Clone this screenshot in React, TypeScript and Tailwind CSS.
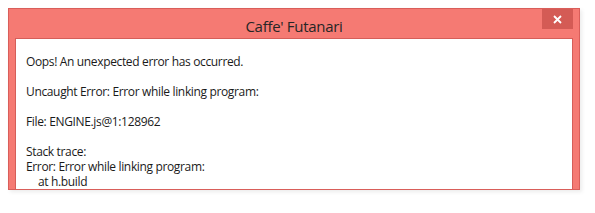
import React from "react";

export default function App() {
  return (
    <div className="w-[595px] h-[213px] bg-white pt-[8px] pl-[8px]" style={{ fontFamily: '"Open Sans", "Noto Sans", sans-serif' }}>
      <div className="w-[572px] h-[182px] bg-[#f57a73] border border-[#d95e5a] shadow-[2px_2px_4px_rgba(0,0,0,0.08)] flex flex-col">
        <div className="h-[29px] flex items-start relative">
          <div className="flex-1 text-center text-[15px] leading-[20px] pt-[7px] text-[#262626] tracking-[-0.3px]">Caffe' Futanari</div>
          <div className="absolute right-[6px] top-0 w-[31px] h-[20px] bg-[#d45b55] flex items-center justify-center">
            <svg width="9" height="9" viewBox="0 0 9 9">
              <path d="M1 1 L8 8 M8 1 L1 8" stroke="#ffffff" strokeWidth="1.8" />
            </svg>
          </div>
        </div>
        <div className="flex-1 ml-[6px] mr-[6px] bg-white border-t border-l border-r border-[#d55e59] pl-[10px] pt-[15px] text-[12px] leading-[15px] text-[#1a1a1a] tracking-[-0.35px]">
          <div>Oops! An unexpected error has occurred.</div>
          <div className="h-[15px]" />
          <div>Uncaught Error: Error while linking program:</div>
          <div className="h-[15px]" />
          <div>File: ENGINE.js@1:128962</div>
          <div className="h-[15px]" />
          <div>Stack trace:</div>
          <div>Error: Error while linking program:</div>
          <div className="pl-[12px]">at h.build</div>
        </div>
      </div>
    </div>
  );
}
